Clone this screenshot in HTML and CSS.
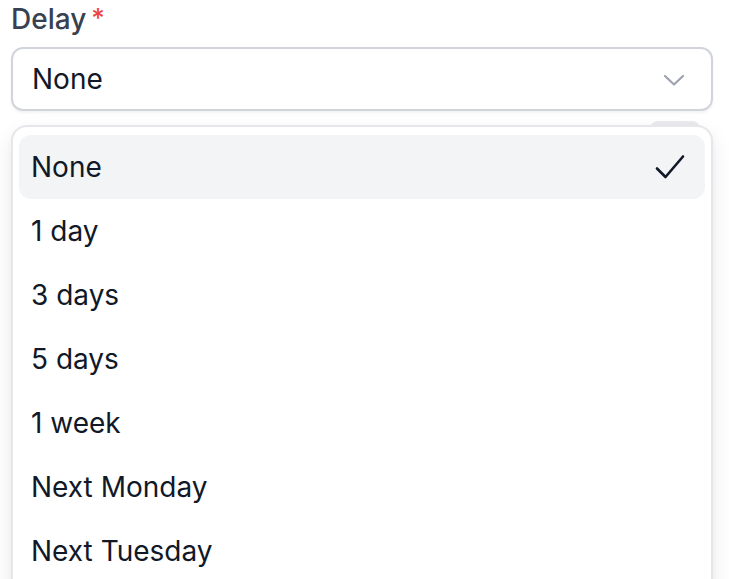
FILE: index.html
```html
<!DOCTYPE html>
<html lang="en">
<head>
<meta charset="utf-8">
<title>Delay</title>
<link rel="stylesheet" href="styles.css">
</head>
<body>
  <div class="field">
    <label class="field-label">Delay<span class="required">*</span></label>
    <button class="select" type="button">
      <span class="select-value">None</span>
      <svg class="chevron" width="22" height="12" viewBox="0 0 22 12" fill="none">
        <path d="M2 2l9 8.5L20 2" stroke="currentColor" stroke-width="2.2" stroke-linecap="round" stroke-linejoin="round"/>
      </svg>
    </button>
    <div class="menu-wrap">
      <span class="menu-tab"></span>
      <ul class="menu">
        <li class="option is-selected">
          <span>None</span>
          <svg class="check" width="30" height="26" viewBox="0 0 30 26" fill="none">
            <path d="M2 14.5l8.5 8.5L28 2.5" stroke="currentColor" stroke-width="2.6" stroke-linecap="round" stroke-linejoin="round"/>
          </svg>
        </li>
        <li class="option"><span>1 day</span></li>
        <li class="option"><span>3 days</span></li>
        <li class="option"><span>5 days</span></li>
        <li class="option"><span>1 week</span></li>
        <li class="option"><span>Next Monday</span></li>
        <li class="option"><span>Next Tuesday</span></li>
      </ul>
    </div>
  </div>
</body>
</html>
```

FILE: styles.css
```css
html, body {
  margin: 0;
  padding: 0;
  background: #ffffff;
  overflow: hidden;
}

body {
  font-family: Inter, "Noto Sans", sans-serif;
  color: #111827;
  -webkit-font-smoothing: antialiased;
}

.field {
  display: flex;
  flex-direction: column;
  padding: 0 16px 0 11px;
}

.field-label {
  display: flex;
  align-items: flex-start;
  gap: 5px;
  height: 36px;
  margin-top: 1px;
  font-size: 28px;
  line-height: 36px;
  font-weight: 500;
  color: #374151;
}

.required {
  color: #ef4444;
  font-size: 26px;
  line-height: 34px;
}

.select {
  display: flex;
  align-items: center;
  justify-content: space-between;
  height: 64px;
  margin-top: 10px;
  padding: 0 26px 0 19px;
  background: #ffffff;
  border: 2px solid #d1d5db;
  border-radius: 12px;
  box-shadow: 0 2px 3px rgba(17, 24, 39, 0.05);
  font-family: inherit;
  font-size: 28px;
  color: #111827;
  text-align: left;
}

.chevron {
  color: #9ca3af;
  margin-top: 2px;
}

.menu-wrap {
  position: relative;
  margin-top: 14px;
}

.menu-tab {
  position: absolute;
  top: -4px;
  right: 13px;
  width: 50px;
  height: 12px;
  border-radius: 8px 8px 0 0;
  background: #ebebef;
}

.menu {
  position: relative;
  list-style: none;
  margin: 0;
  padding: 8px 6px 24px;
  background: #ffffff;
  border: 2px solid #e5e7eb;
  border-radius: 16px;
  box-shadow: 0 10px 24px rgba(17, 24, 39, 0.08), 0 2px 6px rgba(17, 24, 39, 0.04);
}

.option {
  display: flex;
  align-items: center;
  justify-content: space-between;
  height: 64px;
  padding: 0 20px 0 12px;
  border-radius: 12px;
  font-size: 28px;
  color: #111827;
}

.option.is-selected {
  background: #f3f4f6;
}

.check {
  color: #111827;
}
```
